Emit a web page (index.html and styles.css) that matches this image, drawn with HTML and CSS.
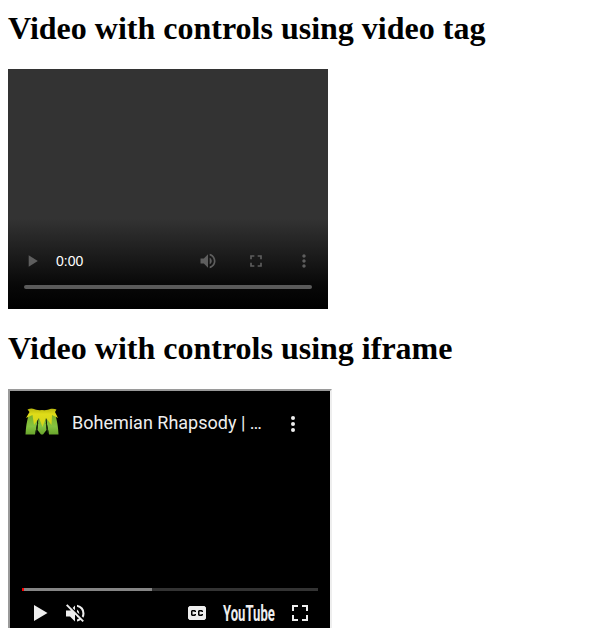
FILE: index.html
```html
<!DOCTYPE html>
<html lang="en">
<head>
<meta charset="utf-8">
<title>Video examples</title>
<link rel="stylesheet" href="styles.css">
</head>
<body>
<h1>Video with controls using video tag</h1>
<div class="video">
  <div class="controls">
    <div class="row">
      <span class="button"><svg viewBox="0 0 24 24"><path d="M8 5v14l11-7z"/></svg></span>
      <span class="time">0:00</span>
      <span class="button"><svg viewBox="0 0 24 24"><path d="M3 9v6h4l5 5V4L7 9H3zm13.500 3c0-1.770-1.020-3.290-2.500-4.030v8.050c1.480-.73 2.500-2.250 2.500-4.020zM14 3.230v2.060c2.890.86 5 3.540 5 6.710s-2.110 5.850-5 6.710v2.060c4.010-.91 7-4.490 7-8.770s-2.990-7.860-7-8.770z"/></svg></span>
      <span class="button"><svg viewBox="0 0 24 24"><path d="M7 14H5v5h5v-2H7v-3zm-2-4h2V7h3V5H5v5zm12 7h-3v2h5v-5h-2v3zM14 5v2h3v3h2V5h-5z"/></svg></span>
      <span class="button"><svg viewBox="0 0 24 24"><path d="M12 8c1.100 0 2-.9 2-2s-.9-2-2-2-2 .9-2 2 .9 2 2 2zm0 2c-1.100 0-2 .9-2 2s.9 2 2 2 2-.9 2-2-.9-2-2-2zm0 6c-1.100 0-2 .9-2 2s.9 2 2 2 2-.9 2-2-.9-2-2-2z"/></svg></span>
    </div>
    <div class="timeline"></div>
  </div>
</div>
<h1>Video with controls using iframe</h1>
<div class="frame">
  <div class="header">
    <svg class="avatar" width="34" height="27" viewBox="0 0 34 27">
      <defs>
        <linearGradient id="leaf" x1="0" y1="0" x2="0" y2="1"><stop offset="0" stop-color="#b9b70d"/><stop offset=".3" stop-color="#e0dc18"/><stop offset="1" stop-color="#cfd31d"/></linearGradient>
        <linearGradient id="stem" x1="0" y1="0" x2="0" y2="1"><stop offset="0" stop-color="#79ad27"/><stop offset=".6" stop-color="#86c440"/><stop offset="1" stop-color="#68a42c"/></linearGradient>
      </defs>
      <path fill="url(#stem)" d="M4 6h9l-1 10-2 10.500H.5Q1 15 4 6zM21 6h9q3 9 3.500 20.500h-9.500L22 16zM13.500 9h7l1 13-3.500 4.500h-2L12.500 22z"/>
      <path d="M12.800 15l-2 10M21.200 15l2 10" fill="none" stroke="#1c300c" stroke-width="1"/>
      <path fill="url(#leaf)" d="M2.500 1.500Q6 .2 8 .8q4 1.800 9 1.200 5 .6 9-1.200 3-.5 5.500.7L30 4l3 6-6-3-.5 10-5.500-7-3.500 9-3.500-9-5 7L7.500 7 1 10l3.500-6z"/>
    </svg>
    <span class="title">Bohemian Rhapsody | …</span>
    <svg class="more" width="6" height="18" viewBox="0 0 6 18"><circle cx="3" cy="3" r="2"/><circle cx="3" cy="9" r="2"/><circle cx="3" cy="15" r="2"/></svg>
  </div>
  <div class="progress"><span class="played"></span><span class="loaded"></span></div>
  <div class="footer">
    <svg width="14" height="16" viewBox="0 0 14 16"><path d="M0 0v16l13.500-8z"/></svg>
    <svg class="mute" width="19" height="19" viewBox="0 0 19 19"><path d="M0 6.500v6h4l5 5v-7L4.700 6.200 4.400 6.500zM9 1.500L6.600 3.900 9 6.300zM11 5.500v2.400l2.200 2.200.1-.6q0-2.700-2.300-4zM11 .8v2q5.400 1.700 5.400 6.700 0 1.400-.6 2.700l1.500 1.500Q18.500 11.800 18.500 9.500 18.500 2.600 11 .8zM1.400.2L0 1.600l11 11v1l.5-.5 1.500 1.500-2 1v2q2-.4 3.500-1.500l2 2 1.400-1.400z"/></svg>
    <svg class="cc" width="18" height="14" viewBox="0 0 18 14"><path fill-rule="evenodd" d="M1.500 0h15L18 1.500v11L16.500 14h-15L0 12.500v-11zM4 4L3 5v4l1 1h3l1-1V8H6.500v.5h-2v-3h2V6H8V5L7 4zm7 0l-1 1v4l1 1h3l1-1V8h-1.500v.5h-2v-3h2V6H15V5l-1-1z"/></svg>
    <svg class="brand" width="54" height="20" viewBox="0 0 54 20"><text x="0" y="17.500" transform="scale(.61 1)" textLength="85" lengthAdjust="spacing">YouTube</text></svg>
    <svg class="full" width="16" height="16" viewBox="0 0 16 16"><path d="M0 0h6v2H2v4H0zM10 0h6v6h-2V2h-4zM0 10h2v4h4v2H0zM14 10h2v6h-6v-2h4z"/></svg>
  </div>
</div>
</body>
</html>
```
FILE: styles.css
```css
html {
  height: 100%;
  overflow: hidden;
}

body {
  height: 628px;
  margin: 0;
  padding: 10px 8px 0;
  box-sizing: border-box;
  overflow: hidden;
  background: #fff;
  font-family: "Liberation Serif", serif;
}

h1 {
  height: 36px;
  margin: 0 0 23px;
  color: #000;
  font-size: 32px;
  line-height: 36px;
  white-space: nowrap;
}

.video {
  display: flex;
  align-items: flex-end;
  width: 320px;
  height: 240px;
  margin-bottom: 21px;
  background: #333;
}

.controls {
  width: 100%;
  height: 96px;
  padding-top: 24px;
  box-sizing: border-box;
  background: linear-gradient(#333 6%, #1b1b1b 45%, #080808 75%, #000);
}

.row {
  display: flex;
  align-items: center;
  height: 48px;
}

.button {
  display: flex;
  justify-content: center;
  width: 48px;
}

.button svg {
  width: 20px;
  height: 20px;
  fill: #5e5e5e;
}

.time {
  flex: 1;
  color: #fff;
  font: 14px/16px "Liberation Sans", sans-serif;
}

.timeline {
  height: 4px;
  margin: 0 16px;
  border-radius: 2px;
  background: #5a5a5a;
}

.frame {
  width: 320px;
  height: 240px;
  border: 2px solid;
  border-color: #9a9a9a #eee #eee #9a9a9a;
  background: #000;
}

.header {
  display: flex;
  align-items: center;
  height: 64px;
  padding: 0 34px 0 15px;
}

.avatar {
  margin-top: -3px;
}

.title {
  flex: 1;
  margin-left: 13px;
  color: #eee;
  font: 18px/22px Roboto, sans-serif;
  white-space: nowrap;
}

.more,
.footer svg {
  fill: #eee;
}

.more {
  margin-top: 2px;
}

.progress {
  display: flex;
  height: 3px;
  margin: 133px 12px 0;
  background: #333;
}

.played {
  width: 2px;
  background: #f00;
}

.loaded {
  width: 128px;
  background: #858585;
}

.footer {
  display: flex;
  align-items: center;
  height: 40px;
  padding: 2px 22px 0 24px;
}

.mute {
  margin-left: 18px;
}

.cc {
  margin-left: auto;
}

.brand {
  margin: 0 15px 0 17px;
  overflow: visible;
  font: 700 21.500px Roboto, sans-serif;
}
```
